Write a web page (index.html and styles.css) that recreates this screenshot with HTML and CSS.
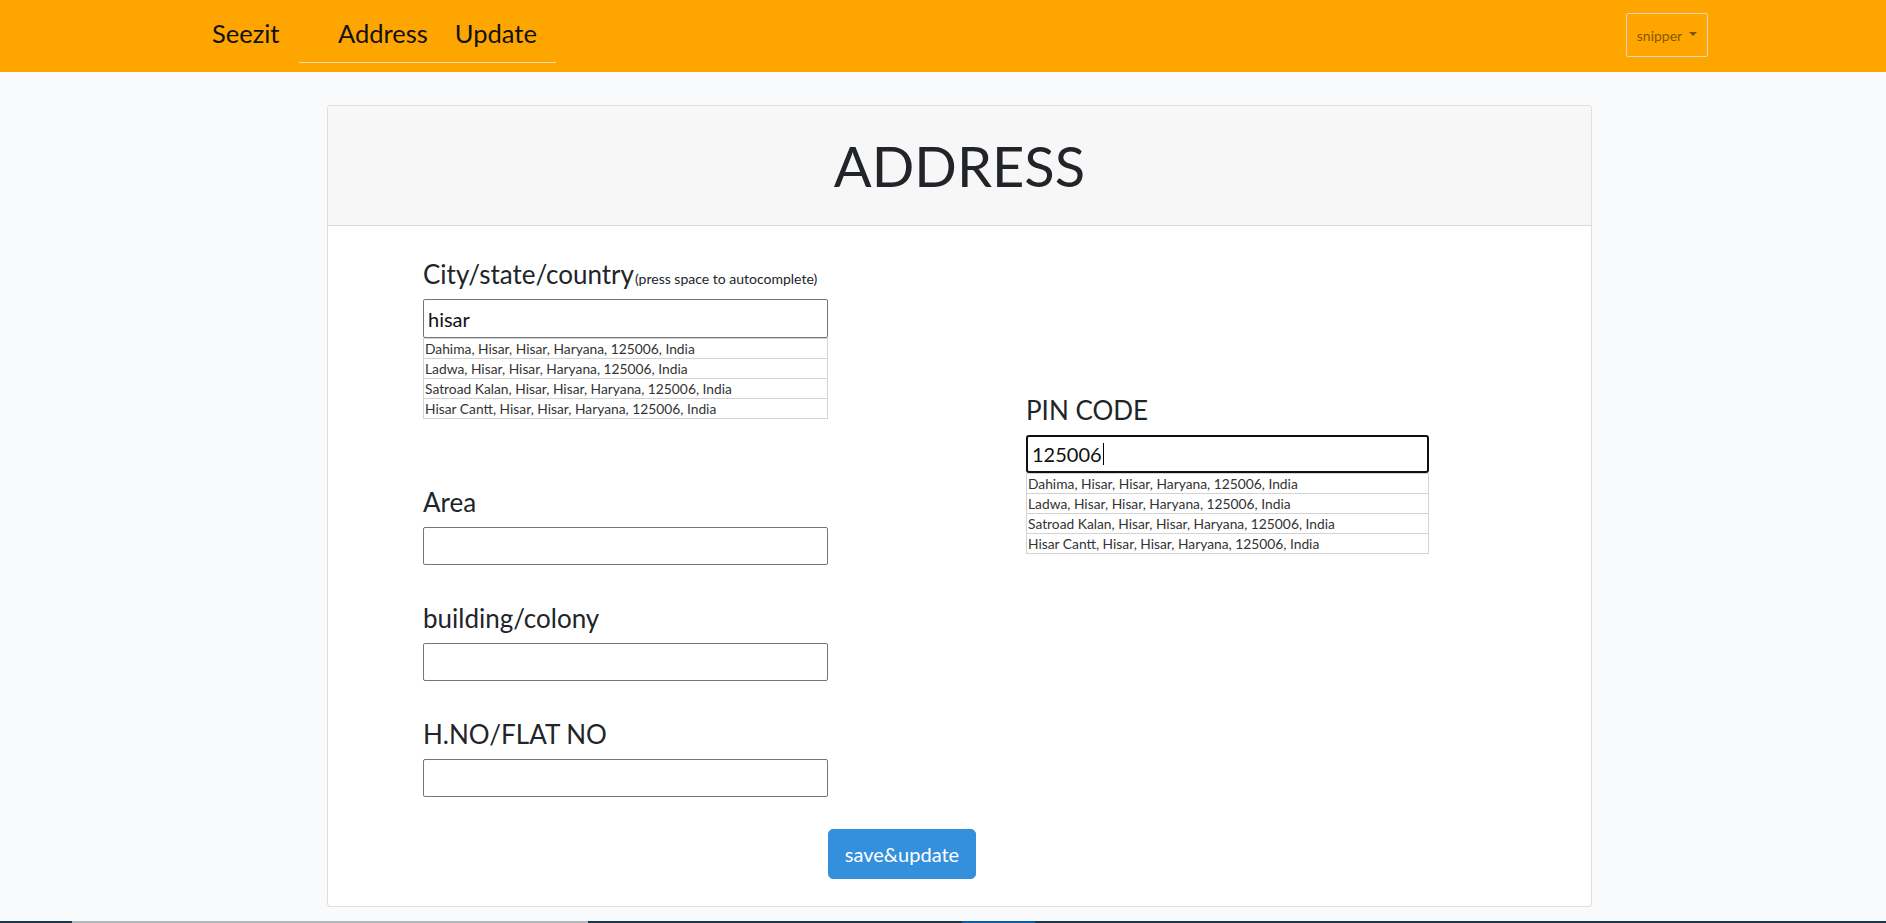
FILE: index.html
```html
<!DOCTYPE html>
<html lang="en">
<head>
<meta charset="utf-8">
<title>Seezit - Address</title>
<link rel="stylesheet" href="styles.css">
</head>
<body>
<nav class="navbar">
  <a class="brand" href="#">Seezit</a>
  <ul class="nav-links">
    <li><a href="#">Address</a></li>
    <li><a href="#">Update</a></li>
  </ul>
  <button class="user-btn" type="button">snipper <span class="caret"></span></button>
</nav>

<main class="page">
  <section class="card">
    <header class="card-header">
      <h1>ADDRESS</h1>
    </header>
    <form class="card-body">
      <div class="col-left">
        <div class="group first">
          <label class="lbl">City/state/country<small>(press space to autocomplete)</small></label>
          <input class="field tall" type="text" value="hisar">
          <ul class="suggest">
            <li>Dahima, Hisar, Hisar, Haryana, 125006, India</li>
            <li>Ladwa, Hisar, Hisar, Haryana, 125006, India</li>
            <li>Satroad Kalan, Hisar, Hisar, Haryana, 125006, India</li>
            <li>Hisar Cantt, Hisar, Hisar, Haryana, 125006, India</li>
          </ul>
        </div>
        <div class="group area">
          <label class="lbl">Area</label>
          <input class="field" type="text">
        </div>
        <div class="group">
          <label class="lbl">building/colony</label>
          <input class="field" type="text">
        </div>
        <div class="group">
          <label class="lbl">H.NO/FLAT NO</label>
          <input class="field" type="text">
        </div>
      </div>
      <div class="col-right">
        <div class="group">
          <label class="lbl">PIN CODE</label>
          <div class="field focused">125006<span class="cursor"></span></div>
          <ul class="suggest">
            <li>Dahima, Hisar, Hisar, Haryana, 125006, India</li>
            <li>Ladwa, Hisar, Hisar, Haryana, 125006, India</li>
            <li>Satroad Kalan, Hisar, Hisar, Haryana, 125006, India</li>
            <li>Hisar Cantt, Hisar, Hisar, Haryana, 125006, India</li>
          </ul>
        </div>
      </div>
      <div class="actions">
        <button class="btn-save" type="button">save&amp;update</button>
      </div>
    </form>
  </section>
</main>

<div class="taskbar-edge">
  <span class="seg dark s1"></span><span class="seg gray s2"></span><span class="seg dark s3"></span><span class="seg blue s4"></span><span class="seg dark s5"></span>
</div>
</body>
</html>
```

FILE: styles.css
```css
* { box-sizing: border-box; }

html, body {
  margin: 0;
  padding: 0;
}

body {
  background: #f8fafc;
  font-family: Lato, "Noto Sans", "Open Sans", sans-serif;
  color: #212529;
  min-height: 923px;
}

/* ---------- navbar ---------- */
.navbar {
  height: 72px;
  background: #ffa500;
  display: flex;
  align-items: flex-start;
  padding: 0 178px 0 212px;
}

.brand {
  display: block;
  width: 87px;
  margin-top: 19px;
  font-size: 25.5px;
  line-height: 29px;
  color: #111;
  text-decoration: none;
}

.nav-links {
  list-style: none;
  margin: 19px 0 0 0;
  padding: 0 19px 14px 39px;
  display: flex;
  gap: 27px;
  border-bottom: 1px solid #f3dcae;
}

.nav-links a {
  font-size: 25.5px;
  line-height: 29px;
  color: #111;
  text-decoration: none;
}

.user-btn {
  margin: 13px 0 0 auto;
  height: 44px;
  width: 82px;
  background: transparent;
  border: 1px solid #e6d8c0;
  border-radius: 2px;
  font-family: inherit;
  font-size: 14px;
  color: rgba(0, 0, 0, 0.5);
  display: flex;
  align-items: center;
  justify-content: center;
  gap: 7px;
  padding: 0;
}

.caret {
  display: inline-block;
  width: 0;
  height: 0;
  border-left: 4px solid transparent;
  border-right: 4px solid transparent;
  border-top: 4px solid rgba(0, 0, 0, 0.5);
  margin-top: -2px;
}

/* ---------- card ---------- */
.page {
  padding: 33px 0 0 327px;
}

.card {
  width: 1265px;
  background: #fff;
  border: 1px solid rgba(0, 0, 0, 0.125);
  border-radius: 4px;
}

.card-header {
  height: 120px;
  background: #f7f7f7;
  border-bottom: 1px solid rgba(0, 0, 0, 0.125);
  border-radius: 4px 4px 0 0;
  display: flex;
  align-items: center;
  justify-content: center;
}

.card-header h1 {
  margin: 0;
  font-size: 56px;
  font-weight: 400;
  line-height: 67px;
  color: #212529;
}

.card-body {
  display: grid;
  grid-template-columns: 405px 403px;
  column-gap: 198px;
  padding: 31px 0 27px 95px;
  margin: 0;
}

.group { display: flex; flex-direction: column; }
.group + .group { margin-top: 36px; }
.group.area { margin-top: 66px; }

.lbl {
  font-size: 26px;
  line-height: 34px;
  height: 34px;
  margin-bottom: 8px;
  color: #212529;
  white-space: nowrap;
}

.lbl small {
  font-size: 14px;
  line-height: 1;
  margin-left: 1px;
}

.field {
  width: 100%;
  height: 38px;
  border: 1px solid #767676;
  border-radius: 2px;
  background: #fff;
  font-family: inherit;
  font-size: 20px;
  padding: 2px 4px;
  color: #111;
  margin: 0;
}

.field.tall { height: 39px; }

.field.focused {
  height: 38px;
  border: 2px solid #101010;
  border-radius: 3px;
  display: flex;
  align-items: center;
  padding: 0 0 0 4px;
}

.cursor {
  display: inline-block;
  width: 1px;
  height: 22px;
  background: #000;
  margin-left: 1px;
}

.suggest {
  list-style: none;
  margin: 0;
  padding: 0;
  border: 1px solid #d3d3d3;
  border-top: 0;
}

.suggest li {
  height: 20px;
  border-top: 1px solid #d3d3d3;
  font-size: 13.8px;
  line-height: 19px;
  color: #333;
  padding-left: 1px;
  white-space: nowrap;
}

.col-right { padding-top: 136px; }

.actions {
  grid-column: 1 / -1;
  padding-left: 405px;
  margin-top: 32px;
}

.btn-save {
  width: 148px;
  height: 50px;
  background: #3490dc;
  border: 1px solid #3490dc;
  border-radius: 5px;
  color: #fff;
  font-family: inherit;
  font-size: 20px;
  padding: 0;
}

/* ---------- bottom edge ---------- */
.taskbar-edge {
  position: fixed;
  left: 0;
  right: 0;
  bottom: 0;
  height: 2px;
  display: flex;
}

.seg { display: block; height: 100%; }
.dark { background: #1d3648; }
.gray { background: #b5b8bb; }
.blue { background: #0a5ea8; }
.s1 { width: 72px; }
.s2 { width: 516px; }
.s3 { width: 374px; }
.s4 { width: 73px; }
.s5 { flex: 1; }
```
